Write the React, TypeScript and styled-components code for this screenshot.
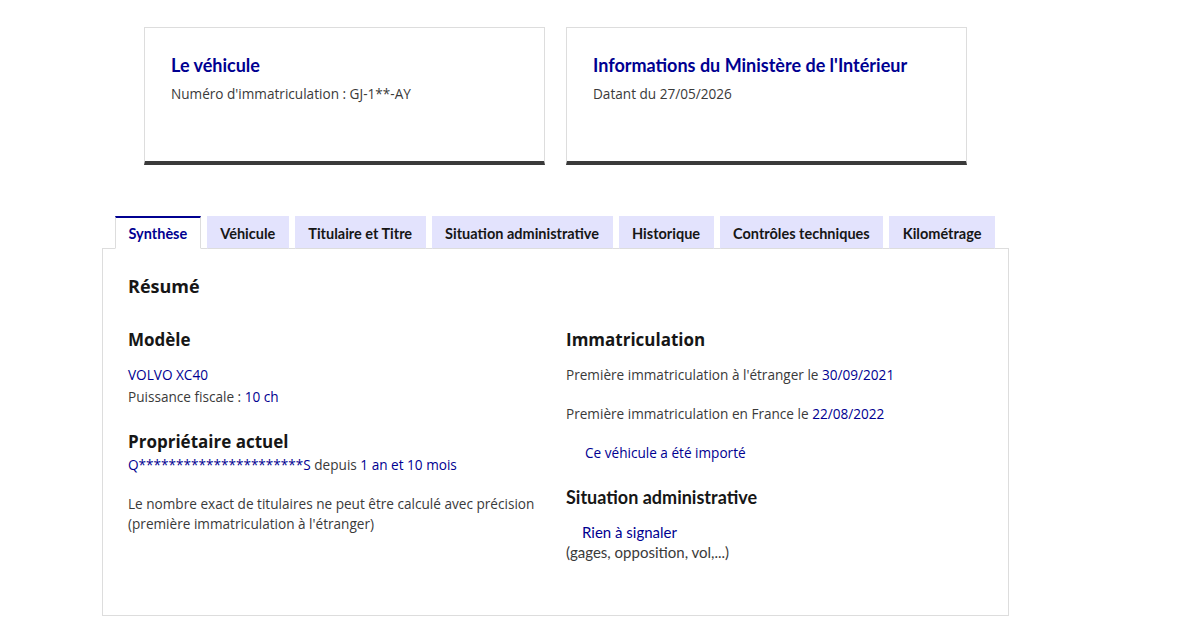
import React from 'react';
import styled, { createGlobalStyle } from 'styled-components';

const GlobalStyle = createGlobalStyle`
  body {
    margin: 0;
    background: #ffffff;
    font-family: 'Open Sans', 'Noto Sans', sans-serif;
    color: #3a3a3a;
  }
`;

const Page = styled.div`
  width: 907px;
  margin-left: 102px;
  padding-top: 27px;
`;

const CardRow = styled.div`
  display: flex;
  gap: 21px;
  padding: 0 42px;
`;

const Card = styled.div`
  width: 401px;
  height: 138px;
  box-sizing: border-box;
  border: 1px solid #dddddd;
  border-bottom: 4px solid #3a3a3a;
  padding: 23px 26px;
`;

const CardTitle = styled.h3`
  margin: 0 0 4px;
  font-family: 'Lato', 'Open Sans', sans-serif;
  font-size: 18px;
  line-height: 28px;
  font-weight: 700;
  color: #000091;
`;

const CardText = styled.p`
  margin: 0;
  font-size: 13.6px;
  line-height: 22px;
  color: #3a3a3a;
`;

const TabList = styled.div`
  display: flex;
  gap: 6px;
  margin-top: 51px;
  padding-left: 13px;
  position: relative;
  z-index: 1;
`;

const Tab = styled.button<{ $active?: boolean }>`
  height: 33px;
  box-sizing: border-box;
  padding: 0 12.5px;
  border: none;
  font-family: 'Lato', 'Open Sans', sans-serif;
  font-size: 14.5px;
  font-weight: 700;
  cursor: pointer;
  background: ${(p) => (p.$active ? '#ffffff' : '#e3e3fd')};
  color: ${(p) => (p.$active ? '#000091' : '#161616')};
  border-top: 2px solid ${(p) => (p.$active ? '#000091' : 'transparent')};
  border-left: 1px solid ${(p) => (p.$active ? '#dddddd' : 'transparent')};
  border-right: 1px solid ${(p) => (p.$active ? '#dddddd' : 'transparent')};
  border-bottom: 1px solid ${(p) => (p.$active ? '#ffffff' : '#dddddd')};
`;

const Panel = styled.div`
  margin-top: -1px;
  height: 368px;
  box-sizing: border-box;
  border: 1px solid #dddddd;
  padding: 25px 25px;
`;

const Summary = styled.h2`
  margin: 0 0 30px;
  font-size: 18px;
  line-height: 24px;
  font-weight: 700;
  color: #161616;
`;

const Columns = styled.div`
  display: grid;
  grid-template-columns: 438px 1fr;
`;

const Column = styled.div`
  display: flex;
  flex-direction: column;
`;

const Heading = styled.h3<{ $alt?: boolean; $gap?: number; $top?: number }>`
  margin: ${(p) => p.$top ?? 0}px 0 ${(p) => p.$gap ?? 0}px;
  font-family: ${(p) => (p.$alt ? "'Lato', 'Open Sans', sans-serif" : 'inherit')};
  font-size: ${(p) => (p.$alt ? '18px' : '17px')};
  line-height: 24px;
  font-weight: 700;
  color: #161616;
`;

const Line = styled.p<{ $top?: number; $lh?: number; $indent?: number; $alt?: boolean }>`
  margin: ${(p) => p.$top ?? 0}px 0 0 ${(p) => p.$indent ?? 0}px;
  font-family: ${(p) => (p.$alt ? "'Lato', 'Open Sans', sans-serif" : 'inherit')};
  font-size: ${(p) => (p.$alt ? '15px' : '13.6px')};
  line-height: ${(p) => p.$lh ?? 22}px;
  color: #3a3a3a;
`;

const Blue = styled.span`
  color: #000091;
`;

const tabs = [
  'Synthèse',
  'Véhicule',
  'Titulaire et Titre',
  'Situation administrative',
  'Historique',
  'Contrôles techniques',
  'Kilométrage',
];

export default function App() {
  return (
    <>
      <GlobalStyle />
      <Page>
        <CardRow>
          <Card>
            <CardTitle>Le véhicule</CardTitle>
            <CardText>Numéro d'immatriculation : GJ-1**-AY</CardText>
          </Card>
          <Card>
            <CardTitle>Informations du Ministère de l'Intérieur</CardTitle>
            <CardText>Datant du 27/05/2026</CardText>
          </Card>
        </CardRow>

        <TabList>
          {tabs.map((t, i) => (
            <Tab key={t} $active={i === 0}>
              {t}
            </Tab>
          ))}
        </TabList>

        <Panel>
          <Summary>Résumé</Summary>
          <Columns>
            <Column>
              <Heading $gap={12}>Modèle</Heading>
              <Line>
                <Blue>VOLVO XC40</Blue>
              </Line>
              <Line>
                Puissance fiscale : <Blue>10 ch</Blue>
              </Line>
              <Heading $top={22}>Propriétaire actuel</Heading>
              <Line>
                <Blue>Q**********************S</Blue> depuis <Blue>1 an et 10 mois</Blue>
              </Line>
              <Line $top={18} $lh={20}>
                Le nombre exact de titulaires ne peut être calculé avec précision
                <br />
                (première immatriculation à l'étranger)
              </Line>
            </Column>
            <Column>
              <Heading $gap={12}>Immatriculation</Heading>
              <Line>
                Première immatriculation à l'étranger le <Blue>30/09/2021</Blue>
              </Line>
              <Line $top={17}>
                Première immatriculation en France le <Blue>22/08/2022</Blue>
              </Line>
              <Line $top={17} $indent={19}>
                <Blue>Ce véhicule a été importé</Blue>
              </Line>
              <Heading $alt $top={21} $gap={13}>
                Situation administrative
              </Heading>
              <Line $alt $lh={20} $indent={16}>
                <Blue>Rien à signaler</Blue>
              </Line>
              <Line $alt $lh={20}>
                (gages, opposition, vol,...)
              </Line>
            </Column>
          </Columns>
        </Panel>
      </Page>
    </>
  );
}
